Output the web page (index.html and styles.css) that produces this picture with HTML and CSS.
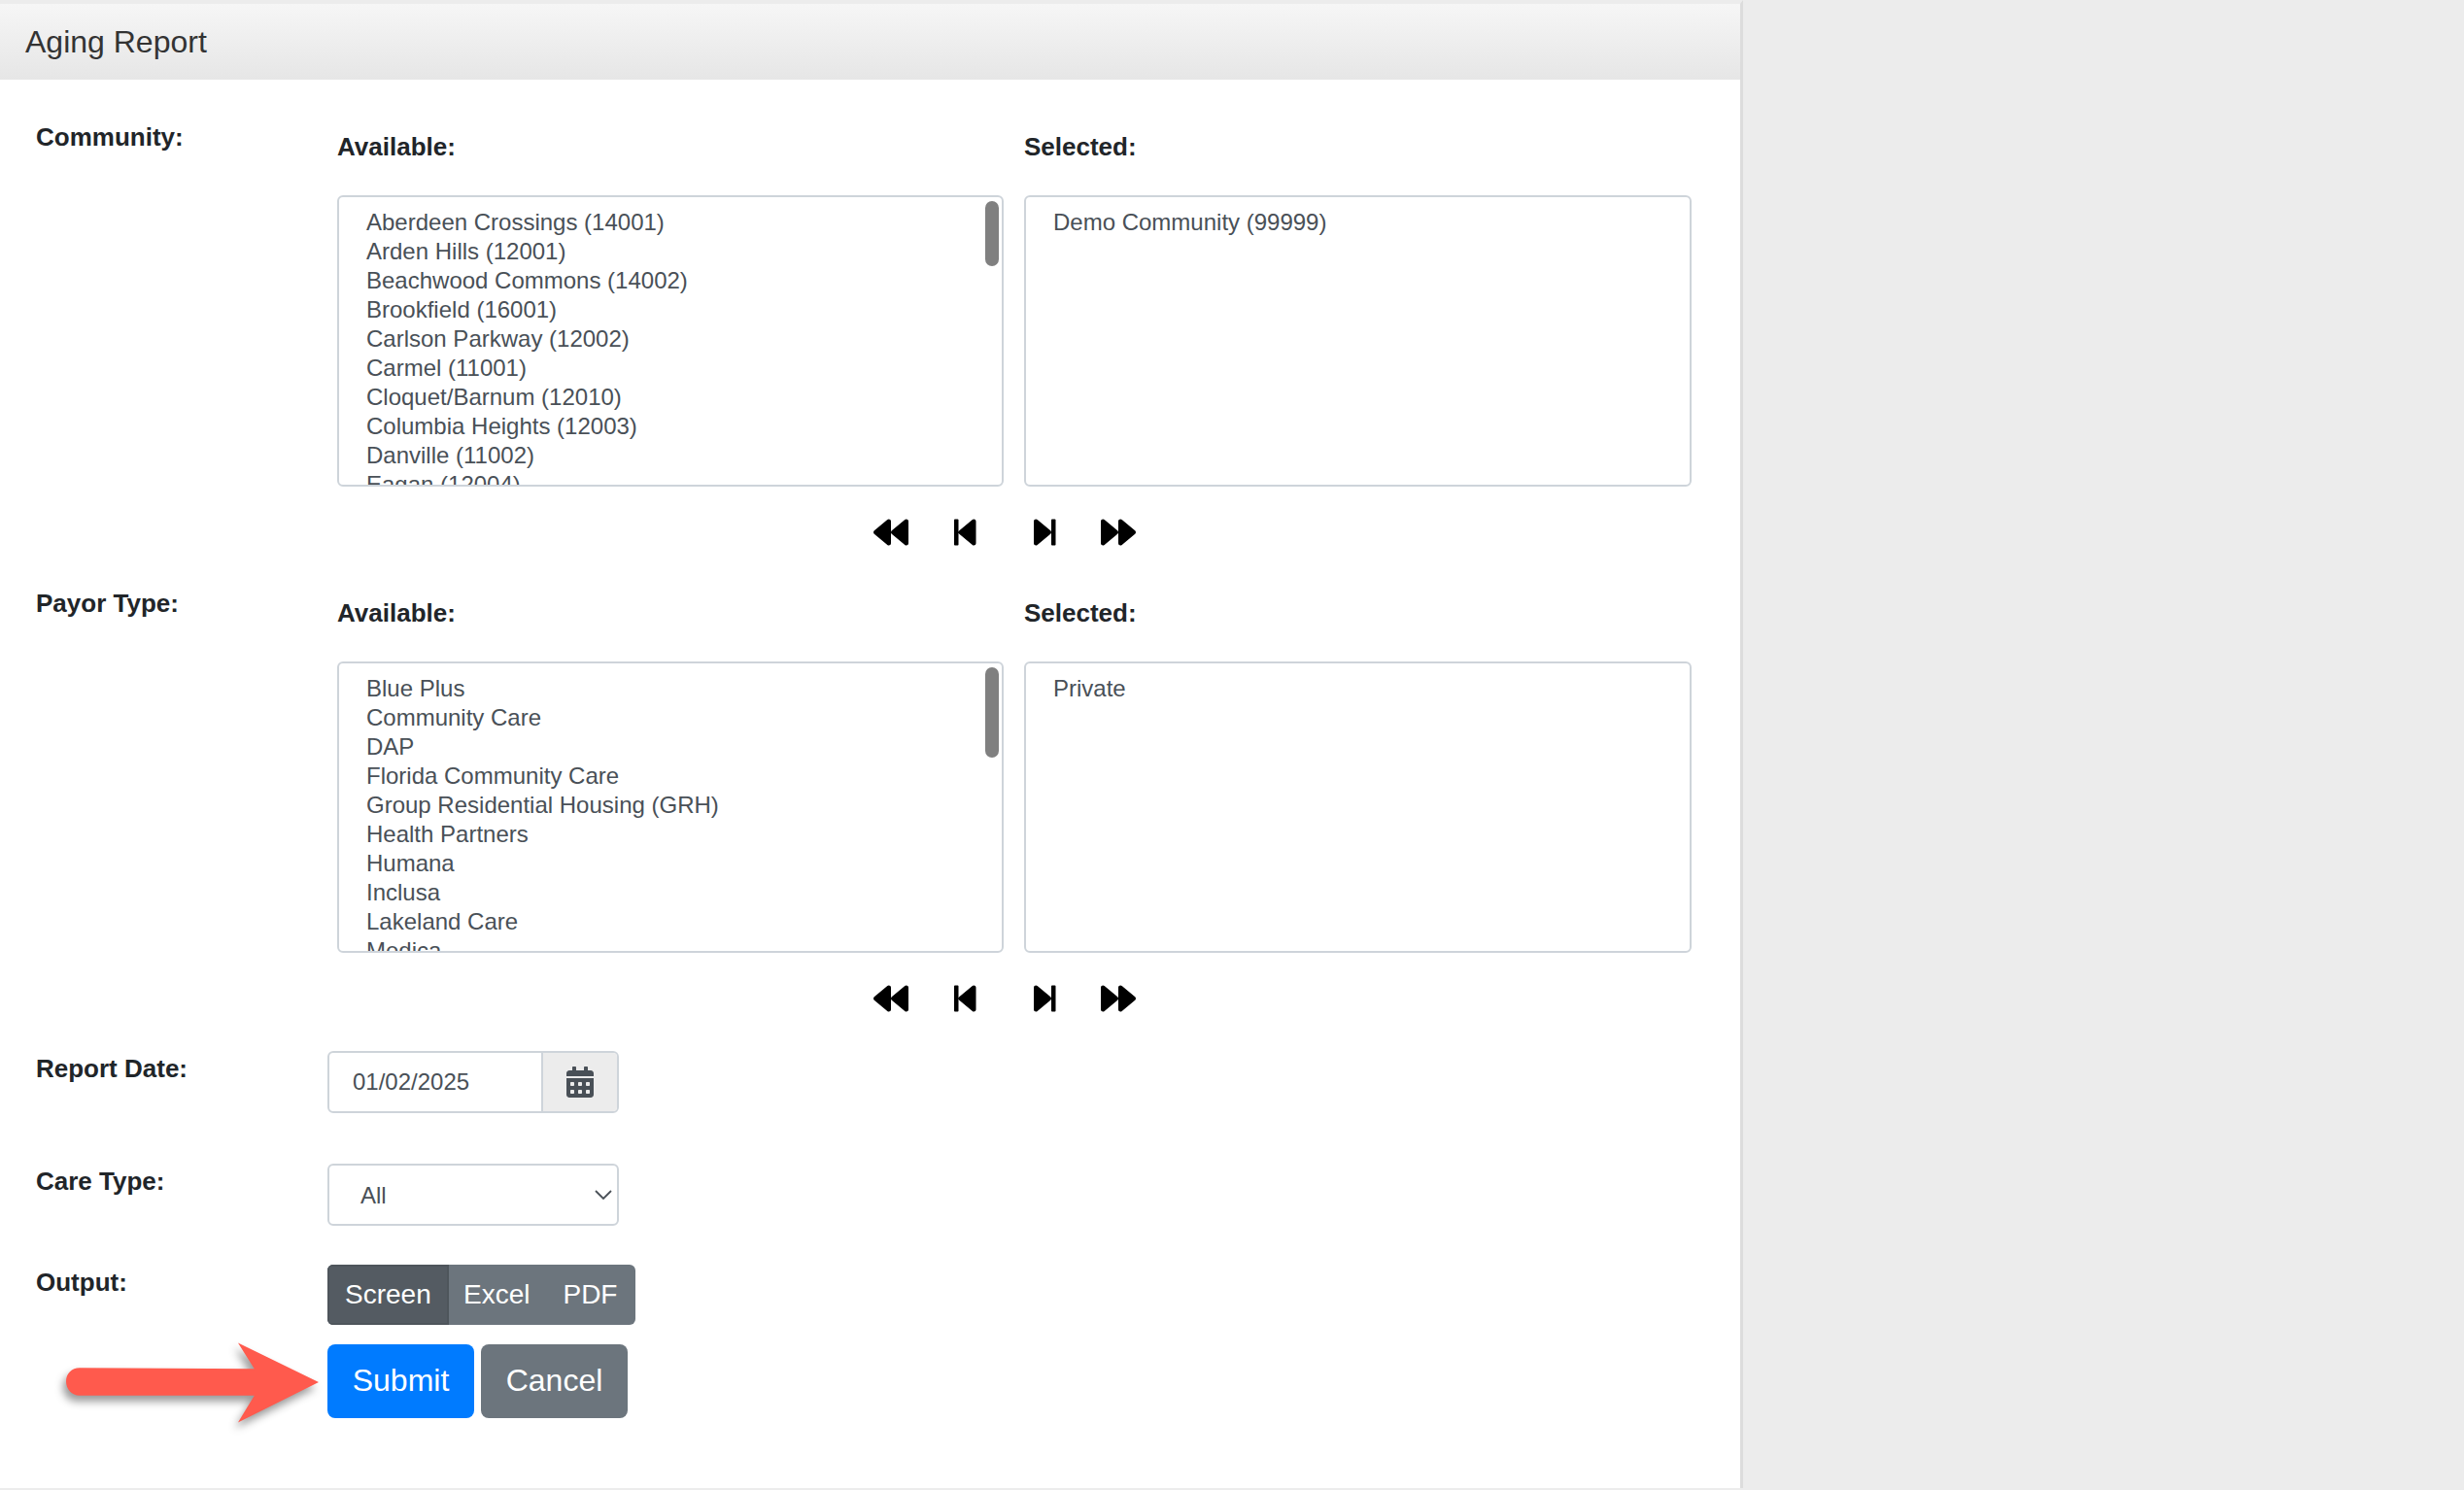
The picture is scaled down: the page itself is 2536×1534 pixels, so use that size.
FILE: index.html
```html
<!DOCTYPE html>
<html lang="en">
<head>
<meta charset="utf-8">
<title>Aging Report</title>
<link rel="stylesheet" href="styles.css">
</head>
<body>
<main class="panel">
  <header class="panel-head">Aging Report</header>
  <form class="report-form">
    <section class="row picker-row">
      <div class="row-label">Community:</div>
      <div class="picker">
        <div class="picker-cols">
          <div class="picker-col">
            <div class="col-title">Available:</div>
            <div class="listbox">
              <ul class="list">
                <li>Aberdeen Crossings (14001)</li>
                <li>Arden Hills (12001)</li>
                <li>Beachwood Commons (14002)</li>
                <li>Brookfield (16001)</li>
                <li>Carlson Parkway (12002)</li>
                <li>Carmel (11001)</li>
                <li>Cloquet/Barnum (12010)</li>
                <li>Columbia Heights (12003)</li>
                <li>Danville (11002)</li>
                <li>Eagan (12004)</li>
              </ul>
              <span class="thumb thumb-short"></span>
            </div>
          </div>
          <div class="picker-col">
            <div class="col-title">Selected:</div>
            <div class="listbox">
              <ul class="list"><li>Demo Community (99999)</li></ul>
            </div>
          </div>
        </div>
        <div class="movers">
          <svg class="ico-wide" viewBox="0 0 512 512"><path d="M11.5 280.6l192 160c20.6 17.2 52.5 2.8 52.5-24.6V96c0-27.4-31.9-41.8-52.5-24.6l-192 160c-15.3 12.8-15.3 36.4 0 49.2zm256 0l192 160c20.6 17.2 52.5 2.8 52.5-24.6V96c0-27.4-31.9-41.8-52.5-24.6l-192 160c-15.3 12.8-15.3 36.4 0 49.2z"/></svg>
          <svg class="ico-step" viewBox="0 0 320 512"><path d="M0 76c0-6.6 5.4-12 12-12h40c6.6 0 12 5.4 12 12v360c0 6.6-5.4 12-12 12H12c-6.6 0-12-5.4-12-12zM75.5 280.6l192 160c20.6 17.2 52.5 2.8 52.5-24.6V96c0-27.4-31.9-41.8-52.5-24.6l-192 160c-15.3 12.8-15.3 36.4 0 49.2z"/></svg>
          <svg class="ico-step ico-mid" viewBox="0 0 320 512"><path d="M244.5 231.4l-192-160C31.9 54.3 0 68.6 0 96v320c0 27.4 31.9 41.8 52.5 24.6l192-160c15.3-12.8 15.3-36.4 0-49.2zM256 76c0-6.6 5.4-12 12-12h40c6.6 0 12 5.4 12 12v360c0 6.6-5.4 12-12 12h-40c-6.6 0-12-5.4-12-12z"/></svg>
          <svg class="ico-wide" viewBox="0 0 512 512"><path d="M500.5 231.4l-192-160C287.9 54.3 256 68.6 256 96v320c0 27.4 31.9 41.8 52.5 24.6l192-160c15.3-12.8 15.3-36.4 0-49.2zm-256 0l-192-160C31.9 54.3 0 68.6 0 96v320c0 27.4 31.9 41.8 52.5 24.6l192-160c15.3-12.8 15.3-36.4 0-49.2z"/></svg>
        </div>
      </div>
    </section>

    <section class="row picker-row picker-row-last">
      <div class="row-label">Payor Type:</div>
      <div class="picker">
        <div class="picker-cols">
          <div class="picker-col">
            <div class="col-title">Available:</div>
            <div class="listbox">
              <ul class="list">
                <li>Blue Plus</li>
                <li>Community Care</li>
                <li>DAP</li>
                <li>Florida Community Care</li>
                <li>Group Residential Housing (GRH)</li>
                <li>Health Partners</li>
                <li>Humana</li>
                <li>Inclusa</li>
                <li>Lakeland Care</li>
                <li>Medica</li>
              </ul>
              <span class="thumb thumb-long"></span>
            </div>
          </div>
          <div class="picker-col">
            <div class="col-title">Selected:</div>
            <div class="listbox">
              <ul class="list"><li>Private</li></ul>
            </div>
          </div>
        </div>
        <div class="movers">
          <svg class="ico-wide" viewBox="0 0 512 512"><path d="M11.5 280.6l192 160c20.6 17.2 52.5 2.8 52.5-24.6V96c0-27.4-31.9-41.8-52.5-24.6l-192 160c-15.3 12.8-15.3 36.4 0 49.2zm256 0l192 160c20.6 17.2 52.5 2.8 52.5-24.6V96c0-27.4-31.9-41.8-52.5-24.6l-192 160c-15.3 12.8-15.3 36.4 0 49.2z"/></svg>
          <svg class="ico-step" viewBox="0 0 320 512"><path d="M0 76c0-6.6 5.4-12 12-12h40c6.6 0 12 5.4 12 12v360c0 6.6-5.4 12-12 12H12c-6.6 0-12-5.4-12-12zM75.5 280.6l192 160c20.6 17.2 52.5 2.8 52.5-24.6V96c0-27.4-31.9-41.8-52.5-24.6l-192 160c-15.3 12.8-15.3 36.4 0 49.2z"/></svg>
          <svg class="ico-step ico-mid" viewBox="0 0 320 512"><path d="M244.5 231.4l-192-160C31.9 54.3 0 68.6 0 96v320c0 27.4 31.9 41.8 52.5 24.6l192-160c15.3-12.8 15.3-36.4 0-49.2zM256 76c0-6.6 5.4-12 12-12h40c6.6 0 12 5.4 12 12v360c0 6.6-5.4 12-12 12h-40c-6.6 0-12-5.4-12-12z"/></svg>
          <svg class="ico-wide" viewBox="0 0 512 512"><path d="M500.5 231.4l-192-160C287.9 54.3 256 68.6 256 96v320c0 27.4 31.9 41.8 52.5 24.6l192-160c15.3-12.8 15.3-36.4 0-49.2zm-256 0l-192-160C31.9 54.3 0 68.6 0 96v320c0 27.4 31.9 41.8 52.5 24.6l192-160c15.3-12.8 15.3-36.4 0-49.2z"/></svg>
        </div>
      </div>
    </section>

    <section class="row date-row">
      <div class="row-label">Report Date:</div>
      <div class="date-group">
        <div class="date-value">01/02/2025</div>
        <div class="date-addon">
          <svg class="ico-cal" viewBox="0 0 448 512"><path d="M0 464c0 26.5 21.5 48 48 48h352c26.5 0 48-21.5 48-48V192H0v272zm320-196c0-6.6 5.4-12 12-12h40c6.6 0 12 5.4 12 12v40c0 6.6-5.4 12-12 12h-40c-6.6 0-12-5.4-12-12v-40zm0 128c0-6.6 5.4-12 12-12h40c6.6 0 12 5.4 12 12v40c0 6.6-5.4 12-12 12h-40c-6.6 0-12-5.4-12-12v-40zM192 268c0-6.6 5.4-12 12-12h40c6.6 0 12 5.4 12 12v40c0 6.6-5.4 12-12 12h-40c-6.6 0-12-5.4-12-12v-40zm0 128c0-6.6 5.4-12 12-12h40c6.6 0 12 5.4 12 12v40c0 6.6-5.4 12-12 12h-40c-6.6 0-12-5.4-12-12v-40zM64 268c0-6.6 5.4-12 12-12h40c6.6 0 12 5.4 12 12v40c0 6.6-5.4 12-12 12H76c-6.6 0-12-5.4-12-12v-40zm0 128c0-6.6 5.4-12 12-12h40c6.6 0 12 5.4 12 12v40c0 6.6-5.4 12-12 12H76c-6.6 0-12-5.4-12-12v-40zM400 64h-48V16c0-8.8-7.2-16-16-16h-32c-8.8 0-16 7.2-16 16v48H160V16c0-8.8-7.2-16-16-16h-32c-8.8 0-16 7.2-16 16v48H48C21.5 64 0 85.5 0 112v48h448v-48c0-26.5-21.5-48-48-48z"/></svg>
        </div>
      </div>
    </section>

    <section class="row care-row">
      <div class="row-label">Care Type:</div>
      <div class="select-box">
        <span class="select-value">All</span>
        <svg class="ico-chev" viewBox="0 0 18 10"><path d="M1 1l8 8 8-8"/></svg>
      </div>
    </section>

    <section class="row output-row">
      <div class="row-label">Output:</div>
      <div class="btn-group">
        <span class="seg seg-active">Screen</span>
        <span class="seg seg-excel">Excel</span>
        <span class="seg seg-pdf">PDF</span>
      </div>
    </section>

    <section class="row action-row">
      <div class="row-label"></div>
      <div class="actions">
        <span class="btn btn-primary">Submit</span>
        <span class="btn btn-secondary">Cancel</span>
      </div>
    </section>

    <svg class="callout" viewBox="0 0 263 83"><path d="M14 26L196 27L179 0L263 41L179 83L196 55L14 55C6 55 0 48 0 40C0 32 6 26 14 26Z"/></svg>
  </form>
</main>
</body>
</html>
```

FILE: styles.css
```css
* {
  box-sizing: border-box;
}

html,
body {
  height: 100%;
}

body {
  margin: 0;
  background: #ececec;
  color: #212529;
  font-family: "Liberation Sans", Arial, sans-serif;
}

.panel {
  width: 1794px;
  height: 1532px;
  background: #fff;
  border-top: 4px solid #ececec;
  border-right: 3px solid #dcdcdc;
}

.panel-head {
  height: 78px;
  padding: 0 0 0 26px;
  font-size: 32px;
  line-height: 78px;
  color: #333;
  background: linear-gradient(#f6f6f6, #e6e6e6);
}

.report-form {
  position: relative;
  padding: 41px 0 0 37px;
}

.row {
  display: grid;
  grid-template-columns: 300px 1fr;
}

.row-label {
  font-size: 26px;
  font-weight: 700;
  line-height: 36px;
}

.picker {
  padding-left: 10px;
}

.picker-cols {
  display: grid;
  grid-template-columns: 686px 687px;
  column-gap: 21px;
}

.col-title {
  margin: 10px 0 32px;
  font-size: 26px;
  font-weight: 700;
  line-height: 36px;
}

.listbox {
  position: relative;
  height: 300px;
  overflow: hidden;
  background: #fff;
  border: 2px solid #ced4da;
  border-radius: 6px;
}

.list {
  margin: 0;
  padding: 11px 0 0 28px;
  list-style: none;
  font-size: 24px;
  line-height: 30px;
  color: #495057;
}

.thumb {
  position: absolute;
  top: 4px;
  right: 3px;
  width: 14px;
  background: #808080;
  border-radius: 7px;
}

.thumb-short {
  height: 67px;
}

.thumb-long {
  height: 93px;
}

.movers {
  display: flex;
  align-items: center;
  height: 101px;
  padding: 0 0 7px 552px;
}

.ico-wide {
  width: 36px;
  height: 36px;
}

.ico-step {
  width: 22.5px;
  height: 36px;
  margin-left: 47px;
}

.ico-step.ico-mid {
  margin-left: 59.5px;
}

.ico-step + .ico-wide {
  margin-left: 46.5px;
}

.picker-row {
  height: 480px;
}

.picker-row-last {
  height: 479px;
}

.date-row {
  height: 116px;
}

.care-row {
  height: 104px;
}

.output-row {
  height: 82px;
}

.date-group {
  display: flex;
  width: 300px;
  height: 64px;
  background: #fff;
  border: 2px solid #ced4da;
  border-radius: 6px;
  overflow: hidden;
}

.date-value {
  flex: 1;
  padding-left: 24px;
  font-size: 24px;
  line-height: 60px;
  color: #495057;
}

.date-addon {
  display: flex;
  align-items: center;
  justify-content: center;
  width: 78px;
  background: #ececec;
  border-left: 2px solid #ced4da;
}

.ico-cal {
  width: 28px;
  height: 32px;
  fill: #495057;
}

.select-box {
  display: flex;
  align-items: center;
  justify-content: space-between;
  width: 300px;
  height: 64px;
  padding: 0 5px 0 32px;
  background: #fff;
  border: 2px solid #ced4da;
  border-radius: 6px;
}

.select-value {
  padding-top: 2px;
  font-size: 24px;
  color: #495057;
}

.ico-chev {
  width: 18px;
  height: 10px;
  fill: none;
  stroke: #495057;
  stroke-width: 1.8;
}

.btn-group {
  display: flex;
  width: 317px;
  height: 62px;
  overflow: hidden;
  color: #fff;
  font-size: 28px;
  line-height: 58px;
  background: #6c757d;
  border-radius: 6px;
}

.seg {
  display: block;
}

.seg-active {
  width: 125px;
  padding-left: 16px;
  background: #545b62;
  border: 2px solid #4e555b;
}

.seg-excel {
  padding: 2px 0 0 15px;
}

.seg-pdf {
  padding: 2px 0 0 34px;
}

.actions {
  display: flex;
  gap: 7px;
}

.btn {
  width: 151px;
  height: 76px;
  text-align: center;
  color: #fff;
  font-size: 32px;
  line-height: 74px;
  border-radius: 8px;
}

.btn-primary {
  background: #007bff;
}

.btn-secondary {
  background: #6c757d;
}

.callout {
  position: absolute;
  left: 68px;
  bottom: -5px;
  width: 260px;
  height: 83px;
  fill: #ff5a4d;
  filter: drop-shadow(-3px 6px 4px rgba(0, 0, 0, 0.4));
}
```
